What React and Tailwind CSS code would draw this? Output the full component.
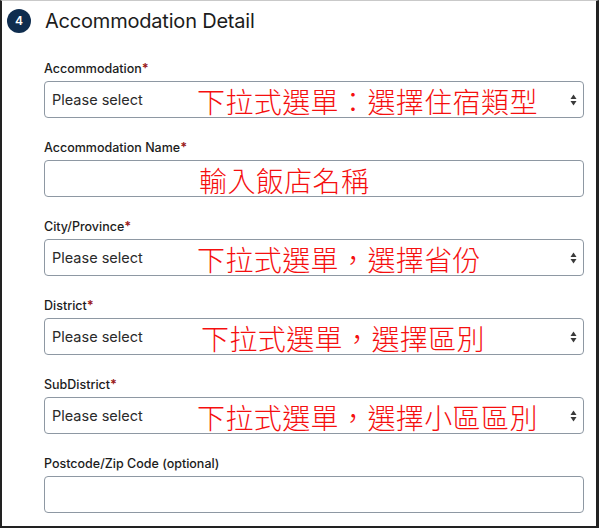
import React from 'react';

const fields = [
  { label: 'Accommodation', required: true, select: true, note: '下拉式選單：選擇住宿類型', noteX: 152 },
  { label: 'Accommodation Name', required: true, select: false, note: '輸入飯店名稱', noteX: 154 },
  { label: 'City/Province', required: true, select: true, note: '下拉式選單，選擇省份', noteX: 152 },
  { label: 'District', required: true, select: true, note: '下拉式選單，選擇區別', noteX: 156 },
  { label: 'SubDistrict', required: true, select: true, note: '下拉式選單，選擇小區區別', noteX: 152 },
  { label: 'Postcode/Zip Code (optional)', required: false, select: false },
];

function Arrows() {
  return (
    <svg width="7" height="12" viewBox="0 0 7 12" className="absolute right-[6px] top-1/2 -translate-y-1/2">
      <path d="M3.5 0.5 L6.5 5 L0.5 5 Z" fill="#3a3a3a" />
      <path d="M3.5 11.5 L6.5 7 L0.5 7 Z" fill="#3a3a3a" />
    </svg>
  );
}

export default function App() {
  return (
    <div
      className="w-[599px] h-[528px] bg-white border-t border-t-[#c9c9c9] border-l-2 border-r-[3px] border-b-2 border-[#222] overflow-hidden"
      style={{ fontFamily: 'Inter, "Noto Sans", sans-serif' }}
    >
      {/* header */}
      <div className="flex items-center pt-[8px] pl-[5px] h-[24px] box-content">
        <div className="w-[24px] h-[24px] rounded-full bg-[#0f2d4f] flex items-center justify-center text-white text-[12px] font-semibold">
          4
        </div>
        <h2 className="ml-[14px] text-[20px] text-[#1c1c1c] tracking-[-0.2px]">Accommodation Detail</h2>
      </div>

      <div className="pl-[42px] pr-[12px] pt-[28px] flex flex-col gap-[22px]">
        {fields.map((f) => (
          <div key={f.label} className="flex flex-col">
            <label className="text-[12.5px] font-medium text-[#1c1c1c] leading-[16px] h-[16px]">
              {f.label}
              {f.required && <span className="text-[#9b1c1c] font-bold">*</span>}
            </label>
            <div className="relative mt-[4px] h-[37px] border border-[#8e98a3] rounded-[4px] flex items-center">
              {f.select && (
                <span className="pl-[7px] text-[14.5px] text-[#2a2a2a]">Please select</span>
              )}
              {f.note && (
                <span
                  className="absolute top-1/2 -translate-y-[45%] text-[28px] font-light leading-none tracking-[0.4px] text-[#f50f0f] whitespace-nowrap"
                  style={{ left: f.noteX, fontFamily: '"Noto Sans CJK TC", sans-serif' }}
                >
                  {f.note}
                </span>
              )}
              {f.select && <Arrows />}
            </div>
          </div>
        ))}
      </div>
    </div>
  );
}
